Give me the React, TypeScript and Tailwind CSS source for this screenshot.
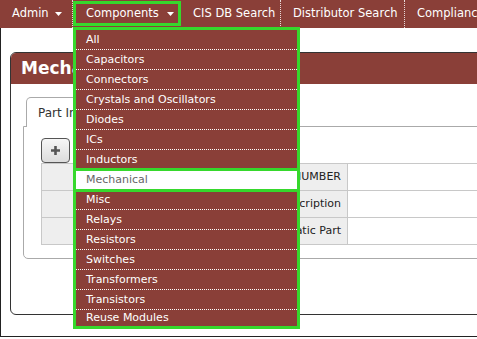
import React from 'react'

const categories = [
  'All',
  'Capacitors',
  'Connectors',
  'Crystals and Oscillators',
  'Diodes',
  'ICs',
  'Inductors',
  'Mechanical',
  'Misc',
  'Relays',
  'Resistors',
  'Switches',
  'Transformers',
  'Transistors',
  'Reuse Modules'
]

const fields = ['PART NUMBER', 'Description', 'Schematic Part']

function Caret() {
  return (
    <svg width="7" height="4" viewBox="0 0 7 4" className="shrink-0">
      <path d="M0 0h7L3.5 4z" fill="#fff" />
    </svg>
  )
}

function ComponentsMenu() {
  return (
    <div className="absolute left-[-3px] top-[23px] z-20 w-[227px] border-[3px] border-[#36d82c] bg-[#8a3f38] text-[11px]">
      {categories.map((c, i) => {
        if (c === 'Mechanical') {
          return (
            <div
              key={c}
              className="relative z-10 -mx-[3px] -my-[2px] flex h-[24px] items-center border-[3px] border-[#36d82c] bg-white pl-[10px] pt-px text-[#666]"
            >
              {c}
            </div>
          )
        }
        const last = i === categories.length - 1
        return (
          <div
            key={c}
            className={
              last
                ? 'flex h-[16px] items-center pl-[10px] pt-px text-white'
                : 'flex h-5 items-center border-b border-dotted border-white pl-[10px] pt-px text-white'
            }
          >
            {c}
          </div>
        )
      })}
    </div>
  )
}

export default function App() {
  return (
    <div className="relative h-[339px] w-[477px] overflow-hidden bg-white font-['DejaVu_Sans',sans-serif] text-[11px]">
      <nav className="flex h-7 items-stretch whitespace-nowrap bg-[#8a3f38] text-[11.5px] text-white">
        <div className="flex w-[73px] shrink-0 items-center gap-[6px] border-r border-dotted border-white/80 pl-3">
          Admin <Caret />
        </div>
        <div className="relative mt-px flex h-[25px] w-[108px] shrink-0 items-center gap-[8px] border-[3px] border-[#36d82c] pl-[10px]">
          Components <Caret />
          <ComponentsMenu />
        </div>
        <div className="flex w-[100px] shrink-0 items-center border-r border-dotted border-white/80 pl-3">
          CIS DB Search
        </div>
        <div className="flex w-[124px] shrink-0 items-center border-r border-dotted border-white/80 pl-3">
          Distributor Search
        </div>
        <div className="flex shrink-0 items-center pl-3">Compliance</div>
      </nav>

      <div className="h-[309px] border-b border-l border-[#222] pl-[9px] pt-6">
        <div className="h-[263px] w-[520px] overflow-hidden rounded-l-[6px] border border-[#333] bg-white">
          <div className="flex h-[31px] items-center bg-[#8a3f38] pl-[10px] text-[17px] font-bold text-white">
            Mechanical
          </div>
          <div className="pl-3 pt-[13px]">
            <div className="flex pl-[3px]">
              <div className="relative z-10 flex h-[30px] items-center rounded-t-[5px] border border-b-0 border-[#aaa] bg-white px-[11px] text-[12px] text-[#333]">
                Part Information
              </div>
            </div>
            <div className="-mt-px h-[133px] rounded-bl-[5px] border border-[#aaa] pl-[17px] pt-[11px]">
              <button
                type="button"
                className="flex h-[25px] w-[29px] items-center justify-center rounded-[4px] border border-[#555] bg-gradient-to-b from-[#f6f6f6] to-[#dcdcdc]"
              >
                <svg width="9" height="9" viewBox="0 0 9 9">
                  <path d="M3.2 0h2.6v3.2H9v2.6H5.8V9H3.2V5.8H0V3.2h3.2z" fill="#555" />
                </svg>
              </button>
              <div className="border-l border-t border-[#c8c8c8]">
                {fields.map(f => (
                  <div key={f} className="flex h-[27px] border-b border-[#c8c8c8]">
                    <div className="flex w-[306px] items-center justify-end border-r border-[#c8c8c8] bg-[#eeeeee] pr-[6px] text-[#222]">
                      {f}
                    </div>
                    <div className="flex-1 bg-white" />
                  </div>
                ))}
              </div>
            </div>
          </div>
        </div>
      </div>
    </div>
  )
}
